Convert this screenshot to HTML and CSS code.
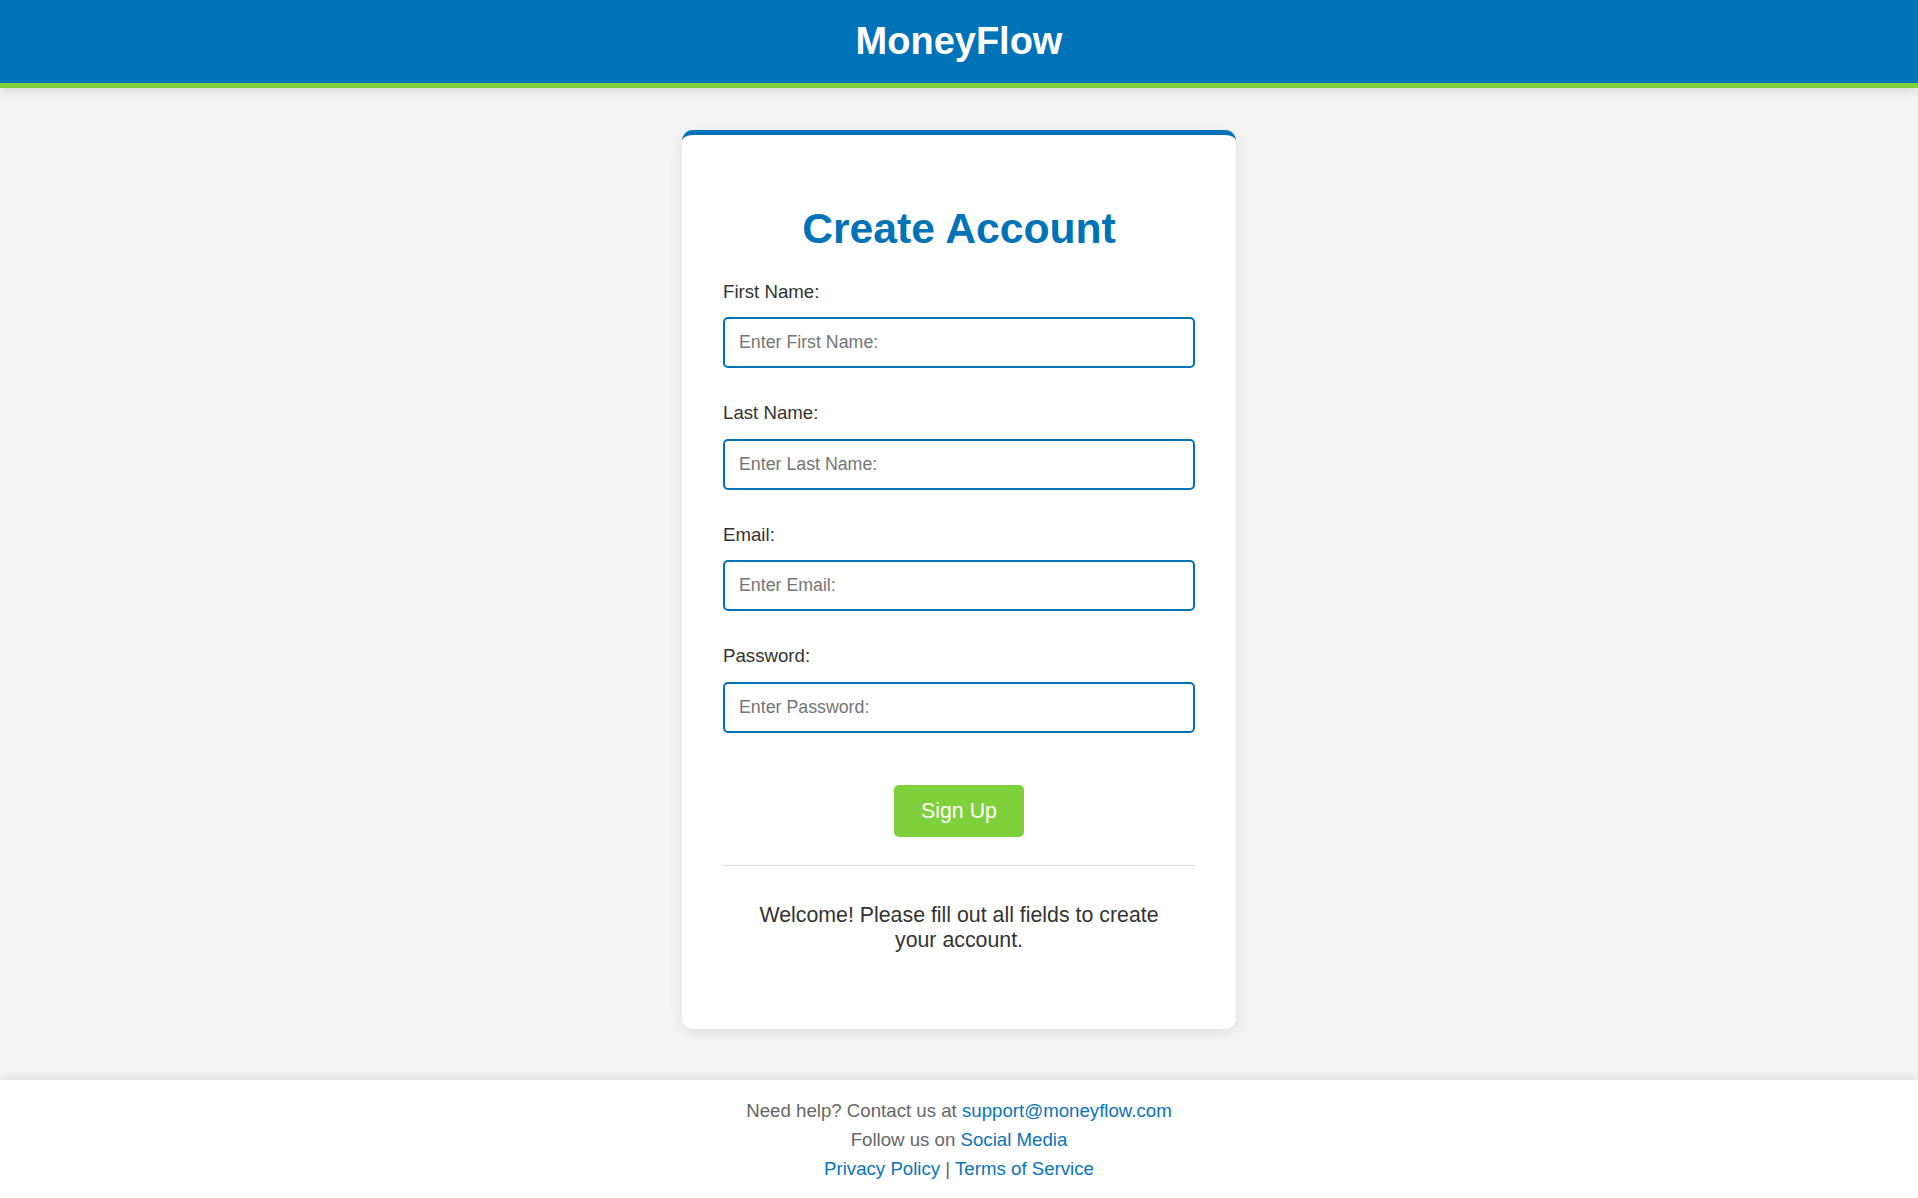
FILE: index.html
```html
<!DOCTYPE html>
<html lang="en">
<head>
<meta charset="utf-8">
<title>MoneyFlow - Create Account</title>
<link rel="stylesheet" href="styles.css">
</head>
<body>
<header class="site-header">
  <h1 class="brand">MoneyFlow</h1>
</header>
<main class="page">
  <div class="card">
    <h2 class="card-title">Create Account</h2>
    <form class="form">
      <div class="field">
        <label class="field-label" for="first">First Name:</label>
        <input class="field-input" id="first" type="text" placeholder="Enter First Name:">
      </div>
      <div class="field">
        <label class="field-label" for="last">Last Name:</label>
        <input class="field-input" id="last" type="text" placeholder="Enter Last Name:">
      </div>
      <div class="field">
        <label class="field-label" for="email">Email:</label>
        <input class="field-input" id="email" type="email" placeholder="Enter Email:">
      </div>
      <div class="field">
        <label class="field-label" for="password">Password:</label>
        <input class="field-input" id="password" type="password" placeholder="Enter Password:">
      </div>
      <div class="actions">
        <button class="btn" type="button">Sign Up</button>
      </div>
    </form>
    <div class="message">
      <p class="message-text">Welcome! Please fill out all fields to create your account.</p>
    </div>
  </div>
</main>
<footer class="site-footer">
  <p class="footer-line">Need help? Contact us at <a class="footer-link" href="#">support@moneyflow.com</a></p>
  <p class="footer-line">Follow us on <a class="footer-link" href="#">Social Media</a></p>
  <p class="footer-line"><a class="footer-link" href="#">Privacy Policy</a> | <a class="footer-link" href="#">Terms of Service</a></p>
</footer>
</body>
</html>
```

FILE: styles.css
```css
* {
  box-sizing: border-box;
}

html, body {
  margin: 0;
  padding: 0;
}

body {
  background: #f4f4f4;
  font-family: "Liberation Sans", Arial, sans-serif;
  color: #333333;
}

.site-header {
  height: 88px;
  padding-bottom: 2px;
  background: #0072b8;
  border-bottom: 5px solid #7ed13b;
  display: flex;
  align-items: center;
  justify-content: center;
  box-shadow: 0 4px 10px rgba(0, 0, 0, 0.1);
  position: relative;
  z-index: 1;
}

.brand {
  margin: 0;
  color: #ffffff;
  font-size: 38px;
  font-weight: bold;
  line-height: 44px;
}

.page {
  padding: 42px 0 51px;
  display: flex;
  justify-content: center;
}

.card {
  width: 554px;
  background: #ffffff;
  border-top: 5px solid #0072b8;
  border-radius: 11px;
  padding: 69px 41px 42px;
  box-shadow: 0 4px 16px rgba(0, 0, 0, 0.09);
}

.card-title {
  margin: 0 0 28.5px;
  text-align: center;
  color: #0072b8;
  font-size: 42.67px;
  font-weight: bold;
  line-height: 48px;
}

.form {
  margin: 0;
}

.field {
  padding-bottom: 34px;
}

.field-label {
  display: block;
  font-size: 18.67px;
  line-height: 21px;
  color: #333333;
  margin-bottom: 15.5px;
}

.field-input {
  display: block;
  width: 100%;
  height: 51px;
  padding: 0 14px;
  border: 2px solid #0072b8;
  border-radius: 5px;
  font-family: "Liberation Sans", Arial, sans-serif;
  font-size: 17.78px;
  color: #333333;
  background: #ffffff;
  outline: none;
}

.field-input::placeholder {
  color: #757575;
}

.actions {
  padding-top: 18.5px;
  display: flex;
  justify-content: center;
}

.btn {
  height: 52px;
  padding: 0 27px;
  border: none;
  border-radius: 5px;
  background: #7ed13b;
  color: #ffffff;
  font-family: "Liberation Sans", Arial, sans-serif;
  font-size: 21.33px;
  line-height: 52px;
  cursor: pointer;
}

.message {
  margin-top: 28px;
  border-top: 1px solid #dddddd;
  padding: 36.5px 24px 33.5px;
}

.message-text {
  margin: 0;
  text-align: center;
  font-size: 21.33px;
  line-height: 25.6px;
  color: #333333;
}

.site-footer {
  background: #ffffff;
  padding: 16px 0 16px;
  text-align: center;
  box-shadow: 0 -4px 10px rgba(0, 0, 0, 0.08);
}

.footer-line {
  margin: 0;
  font-size: 18.67px;
  line-height: 29px;
  color: #666666;
}

.footer-link {
  color: #0a74ba;
  text-decoration: none;
}
```
